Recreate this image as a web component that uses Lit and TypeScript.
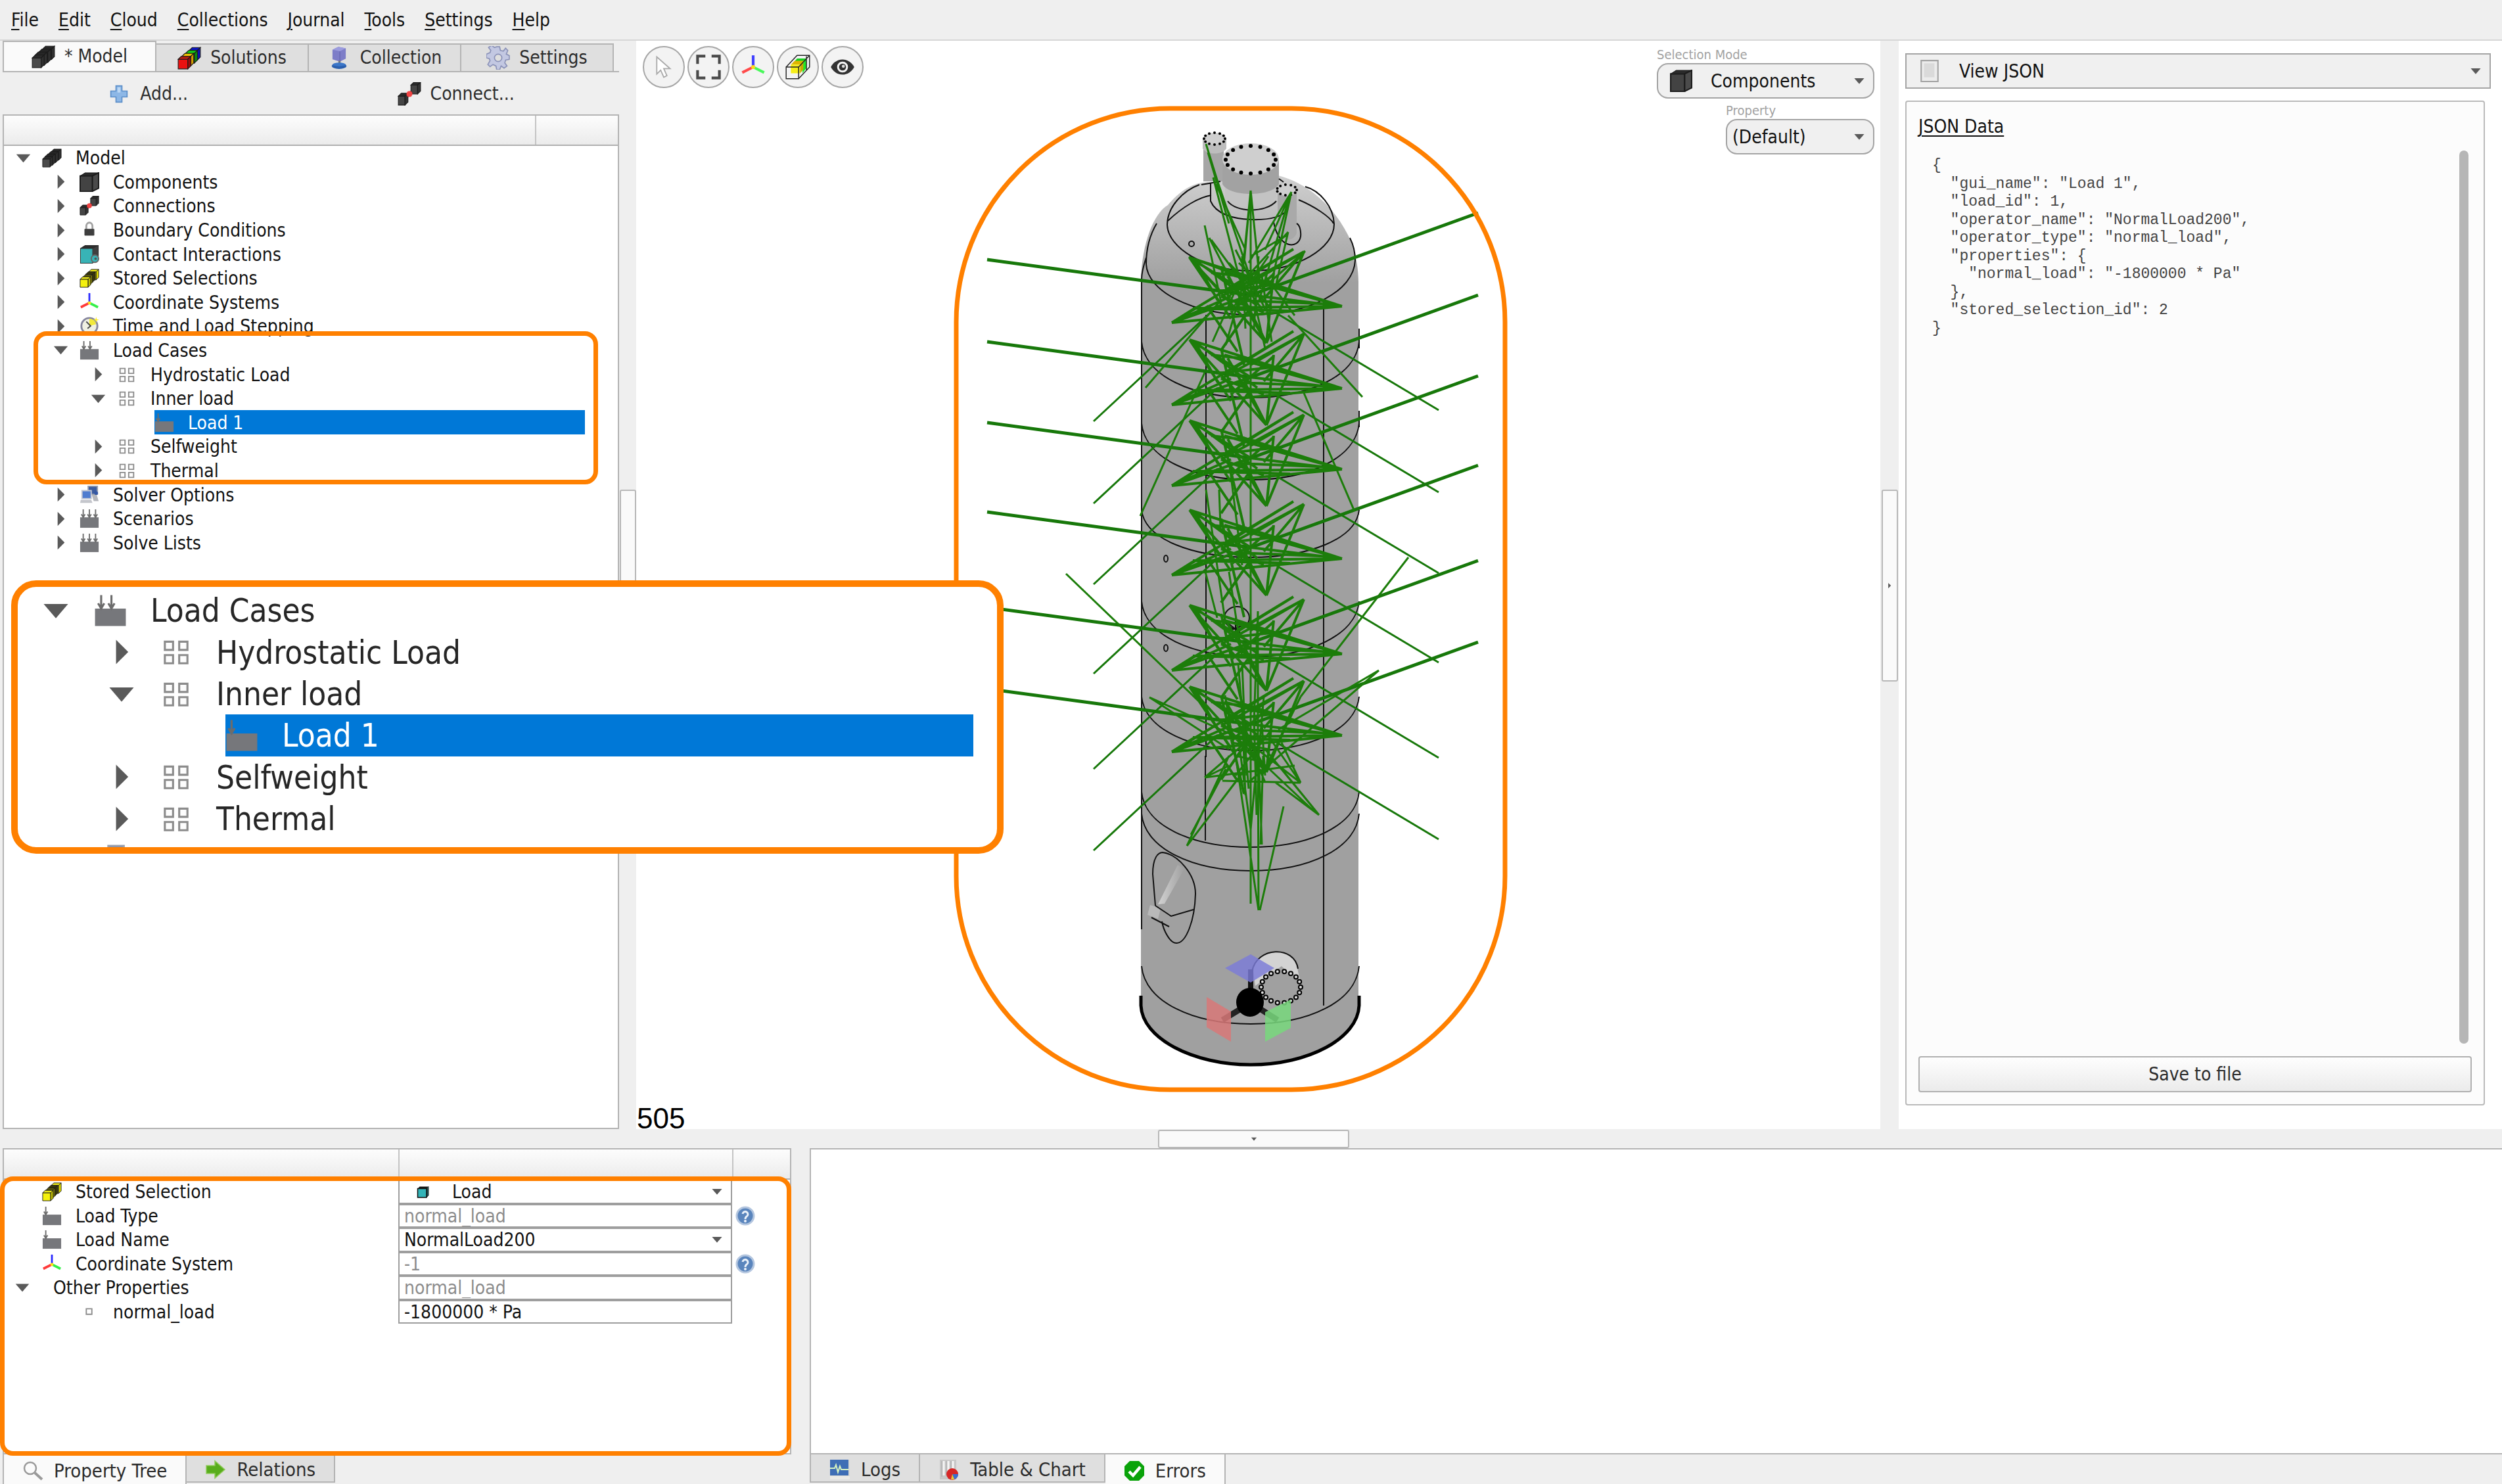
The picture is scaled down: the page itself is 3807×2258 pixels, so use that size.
import { LitElement, html, svg, css, nothing } from "lit";
import { customElement, property, state } from "lit/decorators.js";
import { classMap } from "lit/directives/class-map.js";
import { styleMap } from "lit/directives/style-map.js";

const block = (x: number, y: number, w: number, h: number, d: number, face: string, top: string, side: string) => svg`
  <path d="M${x} ${y}h${w}v${h}h${-w}z" fill=${face} stroke="#1c1c1c" stroke-width="1"/>
  <path d="M${x} ${y}l${d} ${-d}h${w}l${-d} ${d}z" fill=${top} stroke="#1c1c1c" stroke-width="1"/>
  <path d="M${x + w} ${y}l${d} ${-d}v${h}l${-d} ${d}z" fill=${side} stroke="#1c1c1c" stroke-width="1"/>`;

const loadIcon = (arrows: number[]) => svg`
  <path d="M1 14H31V31H1z" fill="#76777b"/>
  ${arrows.map((x) => svg`<path d="M${x} 1V15M${x - 3} 9L${x} 14L${x + 3} 9" fill="none" stroke="#6c6c6c" stroke-width="2"/>`)}`;

const ICONS: Record<string, unknown> = {
  stack: svg`
    ${block(15, 6, 12, 14, 4, "#454545", "#262626", "#303030")}
    ${block(10, 10, 12, 14, 4, "#454545", "#262626", "#303030")}
    ${block(5, 14, 12, 14, 4, "#4b4b4b", "#262626", "#303030")}
    ${block(1, 18, 12, 13, 4, "#4b4b4b", "#2a2a2a", "#303030")}`,
  rainbow: svg`
    ${block(16, 6, 11, 13, 4, "#1a22e0", "#0a12c8", "#0a10b0")}
    ${block(11, 10, 12, 13, 4, "#19b51c", "#12d312", "#0c8f10")}
    ${block(6, 14, 12, 13, 4, "#f4d000", "#f0c400", "#d29c00")}
    ${block(1, 18, 13, 13, 4, "#ea1111", "#b51d10", "#a00c0c")}`,
  yellow: svg`
    ${block(15, 6, 12, 13, 4, "#a5a212", "#e8e51a", "#e6e200")}
    ${block(10, 10, 11, 13, 4, "#6f6d0c", "#3b3a08", "#3b3906")}
    ${block(6, 14, 11, 13, 4, "#8f8c10", "#5d5b0a", "#7a7808")}
    ${block(1, 18, 13, 13, 4, "#f4f10c", "#ece916", "#c4c100")}`,
  cube: svg`
    <path d="M1 6h20v25h-20z" fill="#434343" stroke="#1b1b1b" stroke-width="2"/>
    <path d="M1 6l8-5h22l-10 5z" fill="#2b2b2b" stroke="#1b1b1b"/>
    <path d="M21 6l10-5v25l-10 5z" fill="#4b4b4b" stroke="#1b1b1b" stroke-width="2"/>`,
  contact: svg`
    <path d="M1 6l8-5h22v24l-10 6h-20z" fill="#2c2c2c"/>
    <path d="M2 7h19v23h-19z" fill="#38b3b6"/>
    <path d="M21 7l9-5v23l-9 5z" fill="#3f3f3f"/>
    <circle cx="25" cy="23" r="6" fill="#38b3b6" stroke="#666" stroke-width="2"/>
    <circle cx="26" cy="23" r="2" fill="#555"/>`,
  teal: svg`
    <path d="M6 10l4-4h18l-4 4z" fill="#111"/><path d="M24 10l4-4v18l-4 4z" fill="#1d5557" stroke="#111"/>
    <path d="M6 10h18v18h-18z" fill="#33b4b8" stroke="#111" stroke-width="2"/>`,
  connect: svg`
    ${block(18, 4, 9, 12, 4, "#454545", "#2a2a2a", "#333")}
    ${block(1, 19, 9, 12, 4, "#454545", "#2a2a2a", "#333")}
    <path d="M13 19l6-6" stroke="#7a2020" stroke-width="4"/>
    <circle cx="16" cy="16" r="4" fill="#f04444"/>`,
  lock: svg`
    <path d="M11 17V10a5 6 0 0 1 10 0V17" fill="none" stroke="#a2a2a2" stroke-width="3"/>
    <rect x="8" y="14" width="16" height="11" rx="1" fill="#3e3e3e"/>`,
  axes: svg`
    <path d="M16 17V1" stroke="#2b2bff" stroke-width="3"/>
    <path d="M16 17L2 24" stroke="#ff3a3a" stroke-width="4"/>
    <path d="M16 17L30 24" stroke="#35f04a" stroke-width="4"/>
    <circle cx="16" cy="17" r="2.5" fill="#ffe11a"/>`,
  clock: svg`
    <circle cx="16" cy="16" r="13" fill="#f0f0e2" stroke="#85859c" stroke-width="3"/>
    <path d="M16 16V4A12 12 0 0 1 27 13z" fill="#f2ea3a"/>
    <path d="M11 9L18 16L13 20" fill="none" stroke="#444" stroke-width="2"/>
    <path d="M27 1l1 4 4 1-4 1-1 4-1-4-4-1 4-1z" fill="#ffee22"/>`,
  load1: loadIcon([6]),
  load2: loadIcon([7, 17]),
  load3: loadIcon([6, 16, 26]),
  group: svg`<path d="M5 6h8v8h-8zM19 6h8v8h-8zM5 19h8v8h-8zM19 19h8v8h-8z" fill="#fdfdfd" stroke="#8c8c8c" stroke-width="2"/>`,
  square: svg`<path d="M11 11h9v9h-9z" fill="#fff" stroke="#8c8c8c" stroke-width="2"/>`,
  computer: svg`
    <path d="M14 2h15v13h-15z" fill="#3d5c9e" stroke="#9aa0ae" stroke-width="2"/>
    <path d="M20 16h8l3 10h-8z" fill="#b4b6bc"/>
    <path d="M4 9h15v13h-15z" fill="#4f7ccf" stroke="#c3c7d2" stroke-width="2"/>
    <path d="M2 24h17l2 5h-20z" fill="#c4c6cc"/>
    <circle cx="27" cy="13" r="3" fill="#3357a5"/>`,
  plus: svg`<path d="M12 5h8v7h7v8h-7v7h-8v-7h-7v-8h7z" fill="#8db7e6" stroke="#5d8fc9" stroke-width="1.5"/>
    <path d="M14 7h4v7h-4z" fill="#bcd8f5"/>`,
  database: svg`
    <path d="M7 5l8-4 10 2v14l-8 4-10-3z" fill="#7d7dc8"/>
    <path d="M7 5l8-4 10 2-8 4z" fill="#9c9cde"/><path d="M17 7v14" stroke="#6262ae"/>
    <path d="M15 20h3v5h-3z" fill="#777"/>
    <ellipse cx="16" cy="27" rx="10" ry="4" fill="#2a5fae"/><ellipse cx="16" cy="25" rx="9" ry="2.5" fill="#3b76c8"/>`,
  gear: svg`
    <path d="M14 1h4l1 5 4 1 3-4 3 3-2 5 4 2v5l-5 1-1 4 3 4-4 3-4-3-2 5h-4l-1-5-4-2-4 3-3-3 3-5-1-3-4-1v-5l5-2 1-3-3-4 4-3 4 3z" fill="#c3c8e2" stroke="#8b92b8" stroke-width="1.5"/>
    <circle cx="16" cy="16" r="5" fill="#dfdfdf" stroke="#8b92b8" stroke-width="1.5"/>`,
  cursor: svg`<path d="M7 3V25L12 20L16 29L20 27L16 18H24z" fill="#fff" stroke="#a9a9a9" stroke-width="1.5"/>`,
  frame: svg`<path d="M2 12V2H12M20 2H30V12M30 20V30H20M12 30H2V20" fill="none" stroke="#4a4a4a" stroke-width="3.5"/>`,
  axesView: svg`
    <path d="M16 16V1" stroke="#4141ff" stroke-width="3.5"/>
    <path d="M16 16L2 23" stroke="#ff4a4a" stroke-width="3.5"/>
    <path d="M16 16L30 23" stroke="#48f85a" stroke-width="3.5"/>
    <circle cx="16" cy="16" r="2.5" fill="#ffd91a"/>`,
  section: svg`
    <path d="M9 12l6-7h12l-6 7z" fill="#16d01c"/><path d="M22 12l5-7v12l-5 7z" fill="#22e828"/>
    <path d="M7 13l5-5h12l-5 5z" fill="#dfb400"/><path d="M7 13h12v11h-12z" fill="#f6ee18"/><path d="M19 13l4-5v11l-4 5z" fill="#c9a800"/>
    <path d="M1 16h16v15h-16zM1 16L15 1H31V16L17 31M17 16L31 1M27 2V20" fill="none" stroke="#222" stroke-width="1.2"/>`,
  eye: svg`
    <path d="M1 16C8 3 24 3 31 16C24 29 8 29 1 16z" fill="#333"/>
    <circle cx="16" cy="16" r="7" fill="#f3f3f3"/><circle cx="16" cy="16" r="4.500" fill="#333"/><circle cx="17" cy="15" r="2" fill="#ddd"/>`,
  page: svg`<path d="M4 1h24v30h-24z" fill="#ececec" stroke="#a4a4a4" stroke-width="2"/><path d="M8 5h15v20h-15z" fill="#dadada"/>`,
  search: svg`<circle cx="12" cy="12" r="9" fill="#fbfbfb" stroke="#9a9a9a" stroke-width="2.500"/><path d="M19 19L30 29" stroke="#9a9a9a" stroke-width="4"/>`,
  arrow: svg`<path d="M2 10h13v-7l15 13-15 13v-7h-13z" fill="#58ad1c" stroke="#8fcb5a" stroke-width="1.5"/>`,
  logs: svg`<path d="M1 1h30v30h-30z" fill="#d8d8d4"/><path d="M1 1h28v24h-28z" fill="#3f6fb5"/><path d="M1 14h7l2-5 3 11 3-9 2 5h11" fill="none" stroke="#d6f3c0" stroke-width="2"/><path d="M1 26h30v5h-30z" fill="#ecebe6"/>`,
  chart: svg`<path d="M2 1h25v30h-25z" fill="#c8c8c8"/><path d="M8 3v22M15 3v20M22 3v20" stroke="#f5f5f5" stroke-width="3"/><path d="M5 3v24M12 3v22M19 3v20" stroke="#a5a5a5"/>
    <circle cx="21" cy="23" r="9" fill="#d62626"/><path d="M21 23h9a9 9 0 0 1-6 8z" fill="#3a6fd0"/><path d="M21 23l3 8a9 9 0 0 1-5 0z" fill="#e6c93a"/>`,
  check: svg`<path d="M9 1h14l8 8v14l-8 8h-14l-8-8v-14z" fill="#0aa30a"/><path d="M8 17l6 6 11-13" fill="none" stroke="#fff" stroke-width="4.500"/>`,
  help: svg`<circle cx="16" cy="16" r="13" fill="#5a85bd" stroke="#b4c6df" stroke-width="3"/>
    <path d="M12 13a4 4 0 1 1 6 4c-1 1-2 1-2 4" fill="none" stroke="#eaf1fa" stroke-width="3"/><circle cx="16" cy="24" r="2" fill="#eaf1fa"/>`,
  down: svg`<path d="M5 10H27L16 23z" fill="#5a5a5a"/>`,
  right: svg`<path d="M11 5L22 16L11 27z" fill="#5a5a5a"/>`,
};

@customElement("app-icon")
class AppIcon extends LitElement {
  @property() name = "";
  static styles = css`
    :host { display: block; flex: none; width: 1em; height: 1em; }
    svg { display: block; width: 100%; height: 100%; }
  `;
  render() {
    return html`<svg viewBox="0 0 32 32" aria-hidden="true">${ICONS[this.name] ?? nothing}</svg>`;
  }
}

interface Node { level: number; icon: string; label: string; mark?: "down" | "right" }

const TREE: Node[] = [
  { level: 0, icon: "stack", label: "Model", mark: "down" },
  { level: 1, icon: "cube", label: "Components", mark: "right" },
  { level: 1, icon: "connect", label: "Connections", mark: "right" },
  { level: 1, icon: "lock", label: "Boundary Conditions", mark: "right" },
  { level: 1, icon: "contact", label: "Contact Interactions", mark: "right" },
  { level: 1, icon: "yellow", label: "Stored Selections", mark: "right" },
  { level: 1, icon: "axes", label: "Coordinate Systems", mark: "right" },
  { level: 1, icon: "clock", label: "Time and Load Stepping", mark: "right" },
  { level: 1, icon: "load2", label: "Load Cases", mark: "down" },
  { level: 2, icon: "group", label: "Hydrostatic Load", mark: "right" },
  { level: 2, icon: "group", label: "Inner load", mark: "down" },
  { level: 3, icon: "load1", label: "Load 1" },
  { level: 2, icon: "group", label: "Selfweight", mark: "right" },
  { level: 2, icon: "group", label: "Thermal", mark: "right" },
  { level: 1, icon: "computer", label: "Solver Options", mark: "right" },
  { level: 1, icon: "load3", label: "Scenarios", mark: "right" },
  { level: 1, icon: "load3", label: "Solve Lists", mark: "right" },
];
const LOAD_CASES: Node[] = [...TREE.slice(8, 14), { level: 1, icon: "computer", label: "" }];

@customElement("model-tree")
class ModelTree extends LitElement {
  @property({ attribute: false }) nodes: Node[] = [];
  @property({ type: Number }) base = 0;
  @state() private selected = "Load 1";
  static styles = css`
    :host { display: block; }
    .list { display: grid; grid-auto-rows: 1fr; height: 100%; margin: 0; padding: 0; list-style: none; }
    .row { display: flex; align-items: stretch; min-height: 0; padding-left: calc(var(--indent) * var(--level)); white-space: nowrap; }
    .mark { width: var(--mark-col); display: flex; align-items: center; justify-content: center; flex: none; }
    .mark app-icon { width: var(--mark-size); height: var(--mark-size); }
    .item { flex: 1; display: flex; align-items: center; gap: var(--icon-gap); min-width: 0; line-height: 1; cursor: default; }
    .item app-icon { width: var(--icon-size); height: var(--icon-size); }
    .label { padding-top: 2px; }
    .selected { background: #0078d7; color: #fff; }
  `;
  render() {
    return html`<ul class="list" role="tree">
      ${this.nodes.map((n) => html`
        <li class="row" role="treeitem" aria-level=${n.level + 1} aria-selected=${n.label === this.selected}
          style=${styleMap({ "--level": String(n.level - this.base) })} @click=${() => (this.selected = n.label)}>
          <span class="mark">${n.mark ? html`<app-icon name=${n.mark}></app-icon>` : nothing}</span>
          <span class=${classMap({ item: true, selected: n.label === this.selected })}>
            <app-icon name=${n.icon}></app-icon><span class="label">${n.label}</span>
          </span>
        </li>`)}
    </ul>`;
  }
}

type Line = [number, number, number, number];
const AXIS = 1903;
const STARS = [445, 570, 693, 829, 974, 1098];
const RAYS: Line[] = [
  [-401, -50, 0, 4], [346, -121, 0, 4],
];
const THIN: Line[] = [
  [-239, 196, -50, 20], [286, 179, 40, 32],
];
const SPIKES: Line[] = [
  [139, 21, -93, -53], [139, 21, -88, 24], [139, 21, 0, 4], [139, 21, 30, -9], [139, 21, -40, -30], [130, 18, -20, 12], [139, 21, 20, -14],
  [-120, 46, 0, 4], [-120, 46, 65, -66], [-120, 46, 139, 21], [-120, 46, -30, 6], [-120, 46, -85, 24], [-88, 24, 60, 28],
  [-93, -53, 24, 77], [-93, -53, 0, 4], [-93, -53, -30, 40], [-85, -50, -50, 12], [-80, -46, 10, 20], [-60, -30, 10, -22],
  [81, -62, -45, 6], [81, -62, 24, 77], [81, -62, 20, 10], [81, -62, 0, -15], [65, -66, -25, -10],
  [24, 77, -35, -25], [24, 77, 35, -30], [24, 77, -10, 10], [24, 77, 30, 20],
  [-45, 88, -5, 30], [-67, 20, -20, 90], [-45, -40, -10, 110],
  [-50, -2, 40, -12], [-45, 6, 20, 30], [-30, 30, 35, -28],
];
const EXTRA: Line[] = [
  [1903, 290, 1903, 1375], [1903, 290, 1888, 440], [1903, 290, 1918, 440], [1903, 290, 1893, 400],
  [1835, 219, 1857, 290], [1846, 270, 1885, 420], [1850, 280, 1895, 380], [1854, 280, 1905, 430], [1838, 232, 1870, 340],
  [1965, 292, 1935, 430], [1965, 292, 1900, 400], [1965, 292, 1925, 380], [1962, 300, 1915, 460],
  [1833, 343, 1858, 460], [1833, 343, 1843, 390], [1843, 365, 1920, 470], [1840, 362, 1880, 440],
  [1960, 353, 1880, 440], [1960, 353, 1940, 440], [1958, 358, 1903, 390],
  [1986, 382, 1920, 440], [1986, 382, 1870, 450], [1809, 391, 1855, 440], [1809, 391, 1885, 420],
  [1845, 520, 1885, 430], [1865, 525, 1895, 420], [1925, 530, 1900, 420], [1935, 520, 1920, 420], [1970, 480, 1925, 420],
  [1870, 400, 1935, 470], [1880, 380, 1925, 470], [1875, 470, 1930, 390], [1890, 390, 1895, 500], [1915, 390, 1908, 500], [1885, 400, 1925, 440], [1880, 440, 1930, 425],
  [1743, 590, 1855, 460], [2073, 604, 1960, 480],
  [1833, 567, 1735, 785], [1984, 598, 2061, 778], [1835, 745, 1865, 950], [1855, 745, 1857, 800], [1870, 700, 1890, 860],
  [1834, 870, 1852, 940], [1870, 870, 1890, 1000], [1914, 930, 1914, 1180], [1914, 930, 1908, 1100],
  [1622, 873, 1824, 1067], [1824, 1067, 1880, 1150], [2143, 848, 1979, 1060], [1979, 1060, 1920, 1180],
  [2098, 1020, 1945, 1110], [2098, 1020, 1900, 1190], [1749, 1061, 1870, 1140], [1749, 1061, 1890, 1125],
  [1864, 1058, 1880, 1150], [1923, 1060, 1915, 1150], [1890, 1010, 1897, 1180], [1884, 1010, 1900, 1200],
  [1915, 1385, 1880, 1150], [1915, 1385, 1914, 1120], [1917, 1385, 1953, 1227], [1920, 1285, 1914, 1120], [1918, 1285, 1922, 1150],
  [1903, 1262, 1885, 1130], [1903, 1262, 1915, 1130], [1806, 1287, 1870, 1150], [1806, 1287, 1895, 1170], [1806, 1287, 1880, 1190], [1812, 1270, 1865, 1170],
  [2007, 1240, 1925, 1140], [2007, 1240, 1940, 1190], [2007, 1240, 1950, 1170], [2000, 1235, 1910, 1150],
  [1833, 1183, 1970, 1165], [1833, 1183, 1895, 1130], [1833, 1183, 1870, 1165], [1979, 1191, 1860, 1188], [1979, 1191, 1930, 1120], [1979, 1191, 1900, 1130], [1979, 1191, 1950, 1130],
  [1870, 1110, 1930, 1170], [1880, 1180, 1935, 1110], [1885, 1100, 1925, 1190], [1908, 1090, 1912, 1240], [1920, 1100, 1925, 1180], [1875, 1130, 1930, 1140], [1880, 1150, 1925, 1160], [1890, 1080, 1895, 1210],
];
const lines = (list: Line[], cls: string, dx = 0, dy = 0) =>
  svg`<path class=${cls} d=${list.map(([a, b, c, d]) => `M${a + dx} ${b + dy}L${c + dx} ${d + dy}`).join("")}/>`;

const ring = (cx: number, cy: number, rx: number, ry: number, n: number, r: number, cls = "bolt") =>
  Array.from({ length: n }, (_, i) => {
    const a = (i / n) * Math.PI * 2;
    return svg`<circle class=${cls} cx=${cx + Math.cos(a) * rx} cy=${cy + Math.sin(a) * ry} r=${r}/>`;
  });
const belly = (y: number, depth: number, cls = "edge") =>
  svg`<path class=${cls} d="M1737 ${y}C1742 ${y + depth * 0.62} 1815 ${y + depth} 1903 ${y + depth}S2063 ${y + depth * 0.62} 2068 ${y}"/>`;

@customElement("vessel-view")
class VesselView extends LitElement {
  static styles = css`
    :host { display: block; }
    svg { display: block; width: 100%; height: 100%; }
    .edge { fill: none; stroke: #111; stroke-width: 2; }
    .base { fill: none; stroke: #000; stroke-width: 5; }
    .bolt { fill: #000; }
    .hole { fill: #ddd; stroke: #000; stroke-width: 2; }
    .ray { fill: none; stroke: #17780a; stroke-width: 5; }
    .thin { fill: none; stroke: #17780a; stroke-width: 3; }
    .spike { fill: none; stroke: #1c7d0a; stroke-width: 4; }
    .extra { fill: none; stroke: #1c7d0a; stroke-width: 3; }
    .outline { fill: none; stroke: #ff8000; stroke-width: 7; }
  `;
  render() {
    return html`<svg viewBox="968 62 1893 1656" role="img" aria-label="Pressure vessel with normal load vectors">
      <defs>
        <linearGradient id="dome" gradientUnits="userSpaceOnUse" x1="0" y1="265" x2="0" y2="430">
          <stop offset="0" stop-color="#d0d0d0"/><stop offset="1" stop-color="#a0a0a0"/>
        </linearGradient>
        <linearGradient id="glint" x1="0" y1="0" x2="1" y2="0">
          <stop offset="0" stop-color="#d2d2d2"/><stop offset="1" stop-color="#a0a0a0"/>
        </linearGradient>
      </defs>
      <path fill="url(#dome)" d="M1736 425C1738 370 1755 325 1777 312C1800 285 1820 276 1845 277L1945 267C1995 280 2035 320 2056 368C2064 390 2067 410 2067 430V1530C2065 1580 1990 1621 1903 1621S1740 1580 1736 1530z"/>
      <path fill="#a6a6a6" d="M1831 215V276H1862V215z"/>
      <ellipse cx="1848" cy="212" rx="18" ry="10" fill="#cfcfcf"/>
      <path fill="#bdbdbd" d="M1830 212V226C1836 236 1860 236 1866 226V212z"/>
      <ellipse cx="1848" cy="211" rx="16" ry="9" fill="#d0d0d0"/>
      ${ring(1848, 211, 16, 9, 12, 2)}
      <path fill="#c3c3c3" d="M1864 280V300C1880 320 1925 320 1942 300V280z"/>
      <path fill="#a2a2a2" d="M1860 240V280C1870 300 1935 300 1946 280V240z"/>
      <ellipse cx="1903" cy="242" rx="43" ry="24" fill="#cfcfcf"/>
      ${ring(1903, 243, 38, 21, 16, 3)}
      <path fill="#a9a9a9" d="M1944 290V355C1950 368 1968 368 1973 355V290z"/>
      <ellipse cx="1958" cy="289" rx="16" ry="9" fill="#cfcfcf"/>
      ${ring(1958, 289, 15, 8, 11, 2)}
      <path class="edge" d="M1825 281C1800 290 1776 315 1776 342C1777 377 1832 412 1903 412S2030 378 2030 341C2029 314 2008 290 1986 284
        M1776 337C1800 314 1825 300 1843 297M1976 304C2000 314 2024 330 2029 340
        M1842 278V306C1850 325 1875 333 1903 334S1950 330 1958 320
        M1868 306C1880 323 1925 325 1942 306M1938 338C1945 378 1975 380 1979 360C1980 350 1977 342 1973 340
        M1828 281L1857 276M1946 272L1953 277"/>
      <path class="edge" d="M1760 340C1748 360 1744 382 1744 402C1746 443 1813 479 1903 479S2060 443 2062 396C2062 382 2058 370 2054 362"/>
      <ellipse class="edge" cx="1813" cy="371" rx="4" ry="4"/>
      <path class="edge" d="M1744 392C1738 410 1737 420 1737 425V1414M1835 479V1152M1834 1150V1279M2014 456V1530M2068 500V530M2068 625V650"/>
      ${belly(520, 85)}${belly(644, 86)}${belly(776, 72)}${belly(915, 84)}${belly(1060, 82)}
      ${belly(1205, 84)}${belly(1238, 87)}${belly(1470, 88)}
      <path class="base" d="M1736 1515V1530C1738 1580 1815 1620 1903 1620S2066 1580 2068 1530V1515"/>
      <ellipse class="edge" cx="1774" cy="850" rx="3" ry="5"/><ellipse class="edge" cx="1774" cy="986" rx="3" ry="5"/>
      <ellipse class="edge" cx="1882" cy="940" rx="19" ry="17" fill="#c6c6c6"/>
      <path class="edge" d="M1868 948L1890 965M1875 958L1895 950M1880 970V940"/>
      <path fill="url(#glint)" d="M1792 1316L1802 1322L1772 1375L1762 1376z"/>
      <path fill="#b9b9b9" d="M1750 1377L1766 1382L1762 1398L1746 1392z"/>
      <path class="edge" d="M1758 1378L1754 1330C1754 1305 1762 1297 1769 1297C1792 1300 1819 1330 1819 1360C1818 1400 1805 1435 1790 1435C1780 1435 1770 1415 1768 1402
        M1758 1378L1782 1394L1816 1384M1752 1396L1779 1410"/>
      <path fill="#d3d3d3" d="M1907 1478C1912 1440 1972 1438 1975 1478L1980 1500L1950 1470L1910 1500z"/>
      <path class="edge" d="M1905 1478C1912 1440 1970 1438 1975 1474"/>
      <ellipse cx="1949" cy="1502" rx="32" ry="25" fill="#a0a0a0"/>
      ${ring(1949, 1502, 30, 24, 18, 3, "hole")}
      ${STARS.map((y) => svg`${lines(RAYS, "ray", AXIS, y)}${lines(THIN, "thin", AXIS, y)}${lines(SPIKES, "spike", AXIS, y)}`)}
      ${lines(EXTRA, "extra")}
      <path d="M1903 1475V1520" stroke="#111" stroke-width="8"/>
      <path d="M1903 1526L1860 1552M1903 1526L1944 1552" stroke="#222" stroke-width="9"/>
      <ellipse cx="1902" cy="1525" rx="21" ry="22"/>
      <path fill="#7b7bd8" fill-opacity=".82" d="M1903 1452L1939 1473L1903 1495L1864 1473z"/>
      <path fill="#d87878" fill-opacity=".85" d="M1836 1517L1873 1539V1585L1836 1563z"/>
      <path fill="#78d87c" fill-opacity=".85" d="M1964 1521V1564L1925 1585V1540z"/>
      <rect class="outline" x="1455" y="165" width="835" height="1493" rx="325"/>
    </svg>`;
  }
}

const JSON_LINES = [
  "{",
  '  "gui_name": "Load 1",',
  '  "load_id": 1,',
  '  "operator_name": "NormalLoad200",',
  '  "operator_type": "normal_load",',
  '  "properties": {',
  '    "normal_load": "-1800000 * Pa"',
  "  },",
  '  "stored_selection_id": 2',
  "}",
];
const MENUS = ["File", "Edit", "Cloud", "Collections", "Journal", "Tools", "Settings", "Help"];
const MAIN_TABS = [["stack", "* Model"], ["rainbow", "Solutions"], ["database", "Collection"], ["gear", "Settings"]];
const VIEW_TOOLS = [["cursor", "Select"], ["frame", "Fit view"], ["axesView", "Axes"], ["section", "Section"], ["eye", "Visibility"]];

interface Prop { id: string; label: string; icon?: string; value: string; kind: "select" | "text"; off?: boolean; help?: boolean; group?: boolean; child?: boolean; valueIcon?: string }
const PROPS: Prop[] = [
  { id: "sel", label: "Stored Selection", icon: "yellow", value: "Load", kind: "select", valueIcon: "teal" },
  { id: "type", label: "Load Type", icon: "load1", value: "normal_load", kind: "text", off: true, help: true },
  { id: "name", label: "Load Name", icon: "load1", value: "NormalLoad200", kind: "select" },
  { id: "cs", label: "Coordinate System", icon: "axes", value: "-1", kind: "text", off: true, help: true },
  { id: "other", label: "Other Properties", value: "normal_load", kind: "text", off: true, group: true },
  { id: "nl", label: "normal_load", icon: "square", value: "-1800000 * Pa", kind: "text", child: true },
];

@customElement("app-root")
class AppRoot extends LitElement {
  @state() private mainTab = 0;

  static styles = css`
    :host { display: block; }
    * { box-sizing: border-box; }
    button, select, input { font: inherit; color: inherit; margin: 0; padding: 0; border: 0; background: none; border-radius: 0; }
    select { appearance: none; }
    .app { position: relative; display: grid; grid-template-rows: 62px 1656fr 29px 511fr; height: 100vh; overflow: hidden;
      background: #efefef; color: #111; font: 28px/1.2 "DejaVu Sans Condensed", "Noto Sans", sans-serif; }
    .menubar { display: flex; gap: 30px; align-items: center; padding: 2px 17px 0; border-bottom: 2px solid #d6d6d6; }
    .menu-key { text-decoration: underline; text-underline-offset: 4px; text-decoration-thickness: 2px; }

    .work { display: grid; grid-template-columns: minmax(0, 942fr) 26px minmax(0, 1893fr) 28px minmax(0, 918fr); min-height: 0; }
    .left { position: relative; display: flex; flex-direction: column; padding-left: 4px; min-height: 0; }
    .tabs { display: flex; align-items: flex-end; height: 48px; padding-right: 8px; border-bottom: 2px solid #b4b4b4; }
    .tab { flex: 1; display: flex; align-items: center; justify-content: center; gap: 14px; height: 42px; background: #dfdfdf;
      border: solid #b4b4b4; border-width: 2px 2px 0 0; color: #2c2c2c; white-space: nowrap; line-height: 1; }
    .tab app-icon { width: 36px; height: 36px; }
    .tab.active { height: 46px; background: #fafafa; border-left-width: 2px; }
    .actions { display: flex; justify-content: space-around; height: 64px; padding-top: 2px; }
    .actions button { display: flex; align-items: center; gap: 14px; color: #2c2c2c; }
    .actions app-icon { width: 36px; height: 36px; }
    .tree-box { flex: 1; min-height: 0; background: #fff; border: 2px solid #b4b4b4; }
    .head { display: grid; height: 46px; border-bottom: 2px solid #b0b0b0; background: linear-gradient(#fdfdfd, #ebebeb); }
    .head span + span { border-left: 2px solid #c4c4c4; }
    .tree-head { grid-template-columns: 807fr 126fr; }
    model-tree { --indent: 57px; --mark-col: 58px; --mark-size: 31px; --icon-size: 30px; --icon-gap: 21px; height: 622px; padding-right: 50px; }

    .splitter { display: flex; align-items: center; justify-content: center; padding-top: 1px; }
    .grip { width: 25px; height: 292px; display: flex; align-items: center; justify-content: center; background: #fafafa; border: 2px solid #b8b8b8; border-radius: 3px; }
    .grip app-icon { width: 12px; height: 12px; }
    .grip.flat { width: 291px; height: 28px; }
    .hsplit { display: flex; justify-content: center; align-items: center; padding-left: 8px; }

    .view { position: relative; background: #fff; min-width: 0; min-height: 0; }
    vessel-view { position: absolute; inset: 0; }
    .view-bar { position: absolute; top: 8px; left: 10px; right: 9px; display: flex; justify-content: space-between; align-items: flex-start; }
    .tools { display: flex; gap: 4px; }
    .tool { display: flex; align-items: center; justify-content: center; width: 64px; height: 64px; border: 2px solid #a6a6a6; border-radius: 50%; background: #f3f3f3; }
    .tool app-icon { width: 38px; height: 38px; }
    .modes { display: flex; flex-direction: column; align-items: flex-end; }
    .mode { display: grid; }
    .mode-name { color: #a2a2a2; font-size: 20px; line-height: 26px; height: 26px; }
    .mode + .mode { margin-top: 5px; }
    .combo { display: grid; align-items: center; height: 54px; background: #f0f0f0; border: 2px solid #a4a4a4; }
    .combo > * { grid-area: 1 / 1; }
    .combo select { width: 100%; height: 100%; padding: 2px 8px 0; }
    .combo app-icon { pointer-events: none; width: 34px; height: 34px; }
    .combo .caret { width: 22px; height: 22px; justify-self: end; margin-right: 10px; }
    .combo.round { border-radius: 17px; }
    .combo .lead { margin-left: 18px; }
    .combo .with-icon { padding-left: 80px; }
    .combo.components { width: 331px; }
    .combo.default { width: 226px; }
    .count { position: absolute; left: 1px; bottom: 0; font: 44px/32px "Liberation Sans", Arial, sans-serif; color: #000; }

    .right { display: flex; flex-direction: column; padding: 19px 17px 36px 10px; background: #fff; min-height: 0; }
    .card { flex: 1; min-height: 0; display: flex; flex-direction: column; margin: 18px 9px 0 0; padding: 20px 18px 18px; background: #fcfcfc; border: 2px solid #bababa; border-radius: 4px; }
    .card h2 { margin: 0 0 18px; font-size: 28px; line-height: 36px; font-weight: 400; text-decoration: underline; text-underline-offset: 4px; text-decoration-thickness: 2px; }
    .scroll { flex: 1; display: flex; justify-content: space-between; min-height: 0; margin-bottom: 19px; }
    .code { display: grid; grid-auto-rows: 1fr; height: 275px; margin: 12px 0 0 21px; font: 23px/1 "Liberation Mono", monospace; color: #444; }
    .code span { white-space: pre; }
    .thumb { width: 14px; margin-right: 5px; border-radius: 7px; background: #b6b6b6; }
    .save { height: 55px; flex: none; border: 2px solid #b0b0b0; border-radius: 4px; background: linear-gradient(#fefefe, #ebebeb); color: #2c2c2c; }

    .lower { display: grid; grid-template-columns: minmax(0, 1204fr) 28px minmax(0, 2575fr); min-height: 0; }
    .pane { display: flex; flex-direction: column; min-width: 0; }
    .pane.props { position: relative; padding-left: 4px; }
    .sheet { flex: 1; background: #fff; border: 2px solid #b4b4b4; }
    .sheet.wide { border-right: 0; }
    .prop-head { grid-template-columns: 600fr 508fr 88fr; }
    .prop-grid { display: grid; grid-auto-rows: 1fr; height: 219px; }
    .prop { display: grid; grid-template-columns: 600fr 508fr 88fr; min-height: 0; }
    .prop-label { display: flex; align-items: center; gap: 21px; padding-left: 58px; line-height: 1; }
    .prop-label span { padding-top: 2px; }
    .prop-label app-icon { width: 30px; height: 30px; }
    .prop-label.group { padding-left: 13px; gap: 32px; }
    .prop-label.child { padding-left: 115px; }
    .field { display: grid; align-items: center; min-height: 0; border: 2px solid #9e9e9e; background: #fff; }
    .field > * { grid-area: 1 / 1; min-height: 0; }
    .field select, .field input { width: 100%; height: 32px; padding: 1px 7px 0; line-height: 1; }
    .field .with-icon { padding-left: 80px; }
    .field app-icon { width: 24px; height: 24px; pointer-events: none; margin-left: 23px; }
    .field .caret { width: 22px; height: 22px; justify-self: end; margin-right: 10px; }
    .field .off { color: #8c8c8c; }
    .help { justify-self: start; display: flex; align-items: center; margin-left: 4px; }
    .help app-icon { width: 32px; height: 32px; }
    .foot { display: flex; align-items: flex-start; height: 45px; font-size: 29px; }
    .foot .tab { flex: none; height: 43px; padding: 5px 28px 0; gap: 16px; border-width: 0 2px 2px 0; }
    .foot .tab:first-child { border-left-width: 2px; }
    .foot .tab.active { height: 45px; border-bottom-width: 0; }
    .foot .tab app-icon { width: 32px; height: 32px; }

    .mark-box { position: absolute; border: 7px solid #ff8000; border-radius: 20px; pointer-events: none; }
    .mark-tree { left: 51px; top: 442px; width: 859px; height: 233px; }
    .mark-props { left: 0; right: 0; top: 43px; bottom: 43px; }
    .zoomed { position: absolute; left: 17px; top: 883px; width: 1510px; height: 416px; overflow: hidden; background: #fff; border: 10px solid #ff8000; border-radius: 38px; font-size: 49px; color: #262626; }
    .zoomed model-tree { --indent: 100px; --mark-col: 116px; --mark-size: 54px; --icon-size: 50px; --icon-gap: 36px; height: 444px; margin-top: 4px; padding-right: 36px; }
  `;

  private combo(id: string, label: string, value: string, cls: string, icon?: string) {
    return html`<span class="combo ${cls}">
      <select id=${id} aria-label=${label} class=${icon ? "with-icon" : ""}><option>${value}</option></select>
      ${icon ? html`<app-icon class="lead" name=${icon}></app-icon>` : nothing}
      <app-icon class="caret" name="down"></app-icon>
    </span>`;
  }

  private propRow(p: Prop) {
    const field = p.kind === "select"
      ? html`<select id=${p.id} class=${p.valueIcon ? "with-icon" : ""}><option>${p.value}</option></select>
          ${p.valueIcon ? html`<app-icon name=${p.valueIcon}></app-icon>` : nothing}
          <app-icon class="caret" name="down"></app-icon>`
      : html`<input id=${p.id} type="text" class=${p.off ? "off" : ""} .value=${p.value} ?readonly=${!!p.off}>`;
    return html`<div class="prop">
      <label for=${p.id} class=${classMap({ "prop-label": true, group: !!p.group, child: !!p.child })}>
        <app-icon name=${p.group ? "down" : p.icon ?? ""}></app-icon><span>${p.label}</span>
      </label>
      <span class="field">${field}</span>
      ${p.help ? html`<button class="help" aria-label="Help for ${p.label}"><app-icon name="help"></app-icon></button>` : html`<span></span>`}
    </div>`;
  }

  private footTab(icon: string, label: string, active = false) {
    return html`<button class=${classMap({ tab: true, active })} role="tab" aria-selected=${active}><app-icon name=${icon}></app-icon>${label}</button>`;
  }

  render() {
    return html`<div class="app">
      <nav class="menubar">${MENUS.map((m) => html`<button><span class="menu-key">${m[0]}</span>${m.slice(1)}</button>`)}</nav>

      <div class="work">
        <section class="left">
          <div class="tabs" role="tablist">
            ${MAIN_TABS.map(([icon, label], i) => html`<button role="tab" aria-selected=${i === this.mainTab}
              class=${classMap({ tab: true, active: i === this.mainTab })} @click=${() => (this.mainTab = i)}>
              <app-icon name=${icon}></app-icon>${label}</button>`)}
          </div>
          <div class="actions">
            <button><app-icon name="plus"></app-icon>Add...</button>
            <button><app-icon name="connect"></app-icon>Connect...</button>
          </div>
          <div class="tree-box">
            <div class="head tree-head"><span></span><span></span></div>
            <model-tree .nodes=${TREE}></model-tree>
          </div>
          <div class="mark-box mark-tree"></div>
        </section>
        <div class="splitter"><button class="grip" aria-label="Collapse tree"></button></div>
        <main class="view">
          <vessel-view></vessel-view>
          <div class="view-bar">
            <div class="tools">
              ${VIEW_TOOLS.map(([icon, label]) => html`<button class="tool" aria-label=${label}><app-icon name=${icon}></app-icon></button>`)}
            </div>
            <div class="modes">
              <div class="mode"><label class="mode-name" for="mode">Selection Mode</label>${this.combo("mode", "Selection Mode", "Components", "round components", "cube")}</div>
              <div class="mode"><label class="mode-name" for="prop">Property</label>${this.combo("prop", "Property", "(Default)", "round default")}</div>
            </div>
          </div>
          <div class="count">505</div>
        </main>
        <div class="splitter"><button class="grip" aria-label="Collapse details"><app-icon name="right"></app-icon></button></div>
        <aside class="right">
          ${this.combo("panel", "Panel", "View JSON", "", "page")}
          <div class="card">
            <h2>JSON Data</h2>
            <div class="scroll">
              <code class="code">${JSON_LINES.map((l) => html`<span>${l}</span>`)}</code>
              <div class="thumb"></div>
            </div>
            <button class="save">Save to file</button>
          </div>
        </aside>
      </div>

      <div class="hsplit"><button class="grip flat" aria-label="Collapse lower panes"><app-icon name="down"></app-icon></button></div>

      <div class="lower">
        <section class="pane props">
          <div class="sheet">
            <div class="head prop-head"><span></span><span></span><span></span></div>
            <div class="prop-grid">${PROPS.map((p) => this.propRow(p))}</div>
          </div>
          <div class="foot" role="tablist">${this.footTab("search", "Property Tree", true)}${this.footTab("arrow", "Relations")}</div>
          <div class="mark-box mark-props"></div>
        </section>
        <span></span>
        <section class="pane">
          <div class="sheet wide"></div>
          <div class="foot" role="tablist">${this.footTab("logs", "Logs")}${this.footTab("chart", "Table & Chart")}${this.footTab("check", "Errors", true)}</div>
        </section>
      </div>

      <div class="zoomed"><model-tree .nodes=${LOAD_CASES} .base=${1}></model-tree></div>
    </div>`;
  }
}
